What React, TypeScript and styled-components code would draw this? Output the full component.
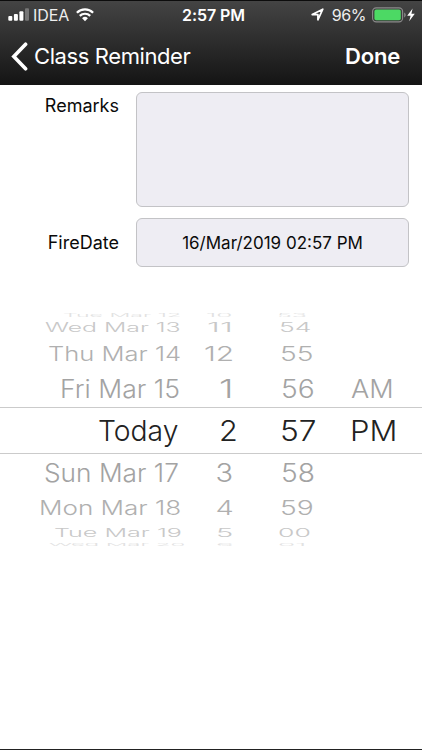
import { FC, useLayoutEffect, useRef, useState } from "react"
import styled, { createGlobalStyle } from "styled-components"

type Cell = {
  text: string
  left: number
  width: number
}

type WheelRow = {
  height: number
  squash: number
  color: string
  cells: Cell[]
  selected?: boolean
}

const cell = (text: string, left: number, width: number): Cell => ({
  text,
  left,
  width,
})

// left is counted from the start of the column: day, hour, minute, period
const rows: WheelRow[] = [
  {
    height: 4,
    squash: 0.15,
    color: "#e2e2e2",
    cells: [cell("Tue Mar 12", 63, 118), cell("10", 6, 26), cell("53", 7, 30)],
  },
  {
    height: 21,
    squash: 0.44,
    color: "#c8c8c8",
    cells: [cell("Wed Mar 13", 45, 136), cell("11", 7, 26), cell("54", 9, 32)],
  },
  {
    height: 31,
    squash: 0.68,
    color: "#b0b0b0",
    cells: [cell("Thu Mar 14", 48, 133), cell("12", 4, 30), cell("55", 10, 33)],
  },
  {
    height: 38,
    squash: 0.86,
    color: "#a3a3a3",
    cells: [
      cell("Fri Mar 15", 60, 120),
      cell("1", 19, 14),
      cell("56", 11, 34),
      cell("AM", -1, 43),
    ],
  },
  {
    height: 47,
    squash: 1,
    color: "#222222",
    selected: true,
    cells: [
      cell("Today", 98, 80),
      cell("2", 18.5, 19),
      cell("57", 10, 36),
      cell("PM", -2, 47),
    ],
  },
  {
    height: 36,
    squash: 0.86,
    color: "#a3a3a3",
    cells: [
      cell("Sun Mar 17", 44, 135),
      cell("3", 15.5, 18),
      cell("58", 11, 34),
    ],
  },
  {
    height: 34,
    squash: 0.67,
    color: "#b0b0b0",
    cells: [
      cell("Mon Mar 18", 39, 142),
      cell("4", 15.5, 18),
      cell("59", 10, 34),
    ],
  },
  {
    height: 16,
    squash: 0.42,
    color: "#c8c8c8",
    cells: [cell("Tue Mar 19", 54, 128), cell("5", 16, 17), cell("00", 8, 33)],
  },
  {
    height: 9,
    squash: 0.14,
    color: "#e2e2e2",
    cells: [cell("Wed Mar 20", 49, 136), cell("6", 16, 17), cell("01", 8, 28)],
  },
]

// Stretches a label to the width it takes on the curved wheel
const WheelLabel: FC<Cell & { squash: number }> = ({
  text,
  left,
  width,
  squash,
}) => {
  const ref = useRef<HTMLSpanElement>(null)
  const [stretch, setStretch] = useState(1)

  useLayoutEffect(() => {
    if (ref.current) setStretch(width / ref.current.offsetWidth)
  }, [text, width])

  return (
    <WheelCell $left={left}>
      <Label ref={ref} style={{ transform: `scale(${stretch}, ${squash})` }}>
        {text}
      </Label>
    </WheelCell>
  )
}

const StatusBar: FC = () => (
  <Status>
    <StatusLeft>
      <svg width="22" height="13" viewBox="0 0 22 13" fill="#fff">
        <rect x="0.3" y="8" width="4" height="4.8" rx="1" />
        <rect x="5.9" y="6" width="4" height="6.8" rx="1" />
        <rect x="11.4" y="3.3" width="4" height="9.5" rx="1" />
        <rect x="17" y="0.3" width="4" height="12.5" rx="1" fill="#777" />
      </svg>
      <Carrier>IDEA</Carrier>
      <svg width="18" height="14" viewBox="0 0 18 14" fill="none" stroke="#fff">
        <path d="M0.9 4.7a11.6 11.6 0 0 1 16.2 0" strokeWidth="2.3" />
        <path d="M3.8 7.9a7.4 7.4 0 0 1 10.4 0" strokeWidth="2.2" />
        <path
          d="M9 13.2L6.1 10.3a4.1 4.1 0 0 1 5.8 0z"
          fill="#fff"
          stroke="none"
        />
      </svg>
    </StatusLeft>
    <Clock>2:57 PM</Clock>
    <StatusRight>
      <svg width="13" height="13" viewBox="0 0 13 13" fill="none">
        <path
          d="M1.2 6.6L11.8 1.2L6.9 11.8V6.6z"
          stroke="#fff"
          strokeWidth="1.7"
          strokeLinejoin="round"
        />
      </svg>
      <Percent>96%</Percent>
      <svg width="35" height="16" viewBox="0 0 35 16">
        <rect
          x="0.6"
          y="0.9"
          width="30"
          height="14"
          rx="3.6"
          fill="none"
          stroke="#8b8b8b"
          strokeWidth="1.1"
        />
        <rect x="2.4" y="2.6" width="26.4" height="10.6" rx="1.8" fill="#4cd964" />
        <path d="M32.2 5.6c2 .8 2 4 0 4.8z" fill="#8b8b8b" />
      </svg>
      <svg width="8" height="14" viewBox="0 0 8 14">
        <path d="M5.6 0.6L0.2 7.8H3.6L2.2 13.2L7.8 5.7H4.4z" fill="#fff" />
      </svg>
    </StatusRight>
  </Status>
)

const App: FC = () => {
  return (
    <Screen>
      <GlobalStyle />
      <Header>
        <StatusBar />
        <NavBar>
          <BackButton>
            <svg width="18" height="29" viewBox="0 0 18 29">
              <path
                d="M14.6 2.2L2.8 14.5L14.6 26.8"
                fill="none"
                stroke="#fff"
                strokeWidth="3.6"
                strokeLinecap="round"
              />
            </svg>
            <BackTitle>Class Reminder</BackTitle>
          </BackButton>
          <DoneButton>Done</DoneButton>
        </NavBar>
      </Header>
      <Form>
        <FieldLabel $top={4}>Remarks</FieldLabel>
        <Field $height={115} />
        <FieldLabel $top={14.5}>FireDate</FieldLabel>
        <Field $height={49}>16/Mar/2019 02:57 PM</Field>
      </Form>
      <Wheel>
        {rows.map((row) => (
          <Row
            key={row.cells[0].text}
            $height={row.height}
            $color={row.color}
            $selected={row.selected}
          >
            {row.cells.map((item) => (
              <WheelLabel key={item.text} squash={row.squash} {...item} />
            ))}
          </Row>
        ))}
      </Wheel>
    </Screen>
  )
}

const GlobalStyle = createGlobalStyle`
  body {
    margin: 0;
    background: #fff;
    font-family: Inter, "Liberation Sans", sans-serif;
  }
`

const Screen = styled.div`
  width: 422px;
  height: 750px;
  box-sizing: border-box;
  border-bottom: 1px solid #222;
  background: #fff;
  overflow: hidden;
`

const Header = styled.header`
  height: 85px;
  box-sizing: border-box;
  border-top: 1px solid #0c0c0c;
  background: linear-gradient(#444, #141414);
  color: #fff;
`

const Status = styled.div`
  height: 27px;
  display: grid;
  grid-template-columns: 1fr auto 1fr;
  align-items: center;
  padding: 0 7px 0 8px;
`

const StatusLeft = styled.div`
  display: flex;
  align-items: center;
`

const StatusRight = styled.div`
  display: flex;
  align-items: center;
  justify-content: flex-end;
`

const Carrier = styled.span`
  margin: 0 7px 0 3px;
  font-size: 16px;
  letter-spacing: -0.1px;
  color: #eee;
`

const Clock = styled.span`
  padding-left: 4px;
  font-size: 16px;
  font-weight: 600;
  letter-spacing: -0.1px;
`

const Percent = styled.span`
  margin: 0 6px 0 8px;
  font-size: 16px;
  letter-spacing: -0.4px;
  color: #eee;
`

const NavBar = styled.div`
  height: 56px;
  display: flex;
  align-items: center;
  justify-content: space-between;
  padding: 0 22px 0 11px;
`

const BackButton = styled.div`
  display: flex;
  align-items: center;
  gap: 5px;
`

const BackTitle = styled.span`
  font-size: 22px;
  letter-spacing: -0.4px;
`

const DoneButton = styled.span`
  font-size: 22px;
  font-weight: 600;
  letter-spacing: -0.2px;
`

const Form = styled.div`
  height: 228px;
  box-sizing: border-box;
  display: grid;
  grid-template-columns: 119px 273px;
  column-gap: 17px;
  row-gap: 11px;
  align-content: start;
  padding-top: 7px;
`

const FieldLabel = styled.div<{ $top: number }>`
  padding-top: ${({ $top }) => $top}px;
  font-size: 18px;
  line-height: 20px;
  text-align: right;
  color: #0a0a0a;
`

const Field = styled.div<{ $height: number }>`
  height: ${({ $height }) => $height}px;
  box-sizing: border-box;
  display: flex;
  align-items: center;
  justify-content: center;
  border: 1px solid #c3c3c6;
  border-radius: 6px;
  background: #eeedf3;
  font-size: 17px;
  color: #0a0a0a;
`

const Wheel = styled.div`
  display: flex;
  flex-direction: column;
`

const Row = styled.div<{
  $height: number
  $color: string
  $selected?: boolean
}>`
  height: ${({ $height }) => $height}px;
  box-sizing: border-box;
  display: grid;
  grid-template-columns: 200px 70px 82px 1fr;
  grid-template-rows: 100%;
  border: 0 solid #cbcbcb;
  border-width: ${({ $selected }) => ($selected ? "1px 0" : "0")};
  color: ${({ $color }) => $color};
`

const WheelCell = styled.div<{ $left: number }>`
  min-height: 0;
  display: flex;
  align-items: center;
  margin-left: ${({ $left }) => $left}px;
`

const Label = styled.span`
  flex: none;
  font-size: 29px;
  font-weight: 350;
  line-height: 1;
  white-space: nowrap;
  transform-origin: left center;
`

export default App
